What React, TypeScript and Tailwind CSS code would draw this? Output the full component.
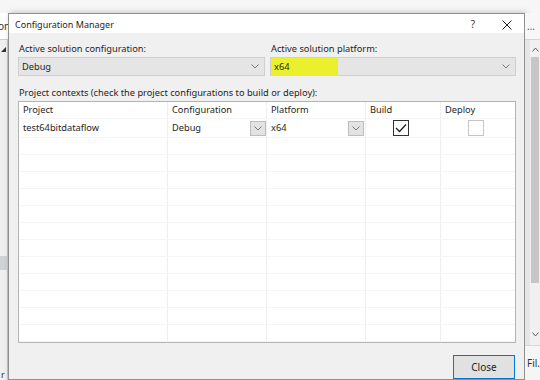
import { ReactNode } from 'react';

const font = "font-['Segoe_UI','Noto_Sans',sans-serif]";

function Chevron({ className = '' }: { className?: string }) {
  return (
    <svg width="8" height="5" viewBox="0 0 8 5" className={className}>
      <polyline points="0.5,0.5 4,4 7.5,0.5" fill="none" stroke="#7a7a7a" strokeWidth="1" />
    </svg>
  );
}

function Combo({ children, highlight }: { children: ReactNode; highlight?: boolean }) {
  return (
    <div className="h-[19px] bg-[#e5e5e5] border border-[#cfcfcf] flex items-center justify-between pr-[5px]">
      {highlight ? (
        <span className="h-[18px] w-[67px] bg-[#ebf02c] pl-[3px] flex items-center">{children}</span>
      ) : (
        <span className="pl-[3px]">{children}</span>
      )}
      <Chevron />
    </div>
  );
}

function CellDrop() {
  return (
    <span className="w-[16px] h-[15px] bg-[#e3e3e3] border border-[#bdbdbd] flex items-center justify-center">
      <Chevron />
    </span>
  );
}

// column widths of the contexts grid
const cols = ['w-[149px]', 'w-[99px]', 'w-[99px]', 'w-[75px]', 'flex-1'];

function Row({ cells, className = '' }: { cells: ReactNode[]; className?: string }) {
  return (
    <div className={`flex border-b border-[#f5f5f5] ${className}`}>
      {cells.map((c, i) => (
        <div key={i} className={`${cols[i]} shrink-0 flex items-center pl-[4px] ${i < 4 ? 'border-r border-[#efefef]' : ''}`}>
          {c}
        </div>
      ))}
    </div>
  );
}

function LeftStrip() {
  return (
    <div className="w-[8px] shrink-0 flex flex-col overflow-hidden">
      <div className="h-[27px] bg-white flex items-center border-b border-[#cdcdcd]">
        <span className="-ml-[2px] text-[10px] text-[#333]">on</span>
      </div>
      <div className="flex-1 bg-[#f0f0f0] border-r border-[#c8c8c8] flex flex-col">
        <svg width="5" height="5" viewBox="0 0 5 5" className="ml-[1px] mt-[7px]">
          <polygon points="5,0 5,5 0,5" fill="#333" />
        </svg>
        <div className="h-[14px] bg-[#cfd3d8] mt-[204px]" />
        <div className="flex-1" />
        <span className="text-[9px] leading-none text-[#333] pl-[1px] pb-[1px]">r</span>
      </div>
    </div>
  );
}

function RightStrip() {
  return (
    <div className="flex-1 flex flex-col overflow-hidden">
      <div className="h-[27px] bg-[#f7f7f7] border-b border-[#d6d6d6] flex items-center pl-[2px] text-[10px] text-[#555]">…</div>
      <div className="flex-1 bg-[#f0f0f0] flex">
        <div className="w-[5px] bg-[#e6e6e6]" />
        <div className="flex-1 flex flex-col items-center bg-[#f0f0f0]">
          <svg width="7" height="5" viewBox="0 0 7 5" className="mt-[7px]">
            <polyline points="0.5,4.5 3.5,1 6.5,4.5" fill="none" stroke="#606060" strokeWidth="1" />
          </svg>
          <div className="w-[8px] h-[226px] bg-[#c6c6c6] mt-[5px]" />
          <div className="flex-1" />
          <svg width="7" height="5" viewBox="0 0 7 5" className="mb-[8px]">
            <polyline points="0.5,0.5 3.5,4 6.5,0.5" fill="none" stroke="#606060" strokeWidth="1" />
          </svg>
        </div>
      </div>
      <div className="h-[35px] bg-[#f5f5f5] border-t border-[#d6d6d6] flex items-center pl-[2px] text-[10px] text-[#333]">Fil…</div>
    </div>
  );
}

export default function App() {
  const empty = Array.from({ length: 12 });
  return (
    <div className={`w-[540px] h-[380px] overflow-hidden bg-[#f4f4f4] flex flex-col ${font} text-[9.25px] text-[#1e1e1e]`}>
      <div className="h-[13px] shrink-0 bg-[#f6f6f6]" />
      <div className="flex flex-1 min-h-0">
        <LeftStrip />
        <div className="w-[517px] shrink-0 border border-[#8f8f8f] bg-[#f0f0f0] flex flex-col shadow-[2px_0_6px_rgba(0,0,0,0.25)]">
          {/* title bar */}
          <div className="h-[23px] bg-white flex items-center pl-[6px] pr-[12px] pt-[2px] text-[9px]">
            <span className="flex-1">Configuration Manager</span>
            <span className="text-[10px] text-[#333] mr-[27px]">?</span>
            <svg width="10" height="10" viewBox="0 0 10 10">
              <path d="M0.5 0.5 L9.5 9.5 M9.5 0.5 L0.5 9.5" stroke="#222" strokeWidth="1" />
            </svg>
          </div>

          <div className="flex-1 flex flex-col pl-[9px] pr-[8px] pt-[8px]">
            <div className="grid grid-cols-[247px_1fr] gap-x-[5px]">
              <div className="flex flex-col">
                <span className="h-[16px] leading-[16px] pl-[1px]">Active solution configuration:</span>
                <Combo>Debug</Combo>
              </div>
              <div className="flex flex-col">
                <span className="h-[16px] leading-[16px] pl-[1px]">Active solution platform:</span>
                <Combo highlight>x64</Combo>
              </div>
            </div>

            <span className="mt-[9px] h-[16px] leading-[16px] pl-[1px]">
              Project contexts (check the project configurations to build or deploy):
            </span>

            <div className="h-[242px] bg-white border border-[#b4b4b4] overflow-hidden flex flex-col">
              <Row className="h-[17px]" cells={['Project', 'Configuration', 'Platform', 'Build', 'Deploy']} />
              <Row
                className="h-[19px]"
                cells={[
                  'test64bitdataflow',
                  <span className="flex-1 flex items-center justify-between">Debug<CellDrop /></span>,
                  <span className="flex-1 flex items-center justify-between pr-[1px]">x64<CellDrop /></span>,
                  <span className="ml-[23px] w-[16px] h-[16px] border border-[#333] bg-white flex items-center justify-center">
                    <svg width="12" height="10" viewBox="0 0 12 10">
                      <polyline points="1,5 4.5,8.5 11,1.5" fill="none" stroke="#222" strokeWidth="1.3" />
                    </svg>
                  </span>,
                  <span className="ml-[23px] w-[16px] h-[16px] border border-[#c6c6c6] bg-white" />,
                ]}
              />
              {empty.map((_, i) => (
                <Row key={i} className="h-[17px]" cells={['', '', '', '', '']} />
              ))}
              <Row className="flex-1 border-b-0" cells={['', '', '', '', '']} />
            </div>

            <div className="flex justify-end mt-[12px] pr-[1px]">
              <button className="w-[62px] h-[24px] border border-[#0078d7] bg-[#e1e1e1] text-[10px] text-[#1e1e1e]">
                Close
              </button>
            </div>
          </div>
        </div>
        <RightStrip />
      </div>
    </div>
  );
}
